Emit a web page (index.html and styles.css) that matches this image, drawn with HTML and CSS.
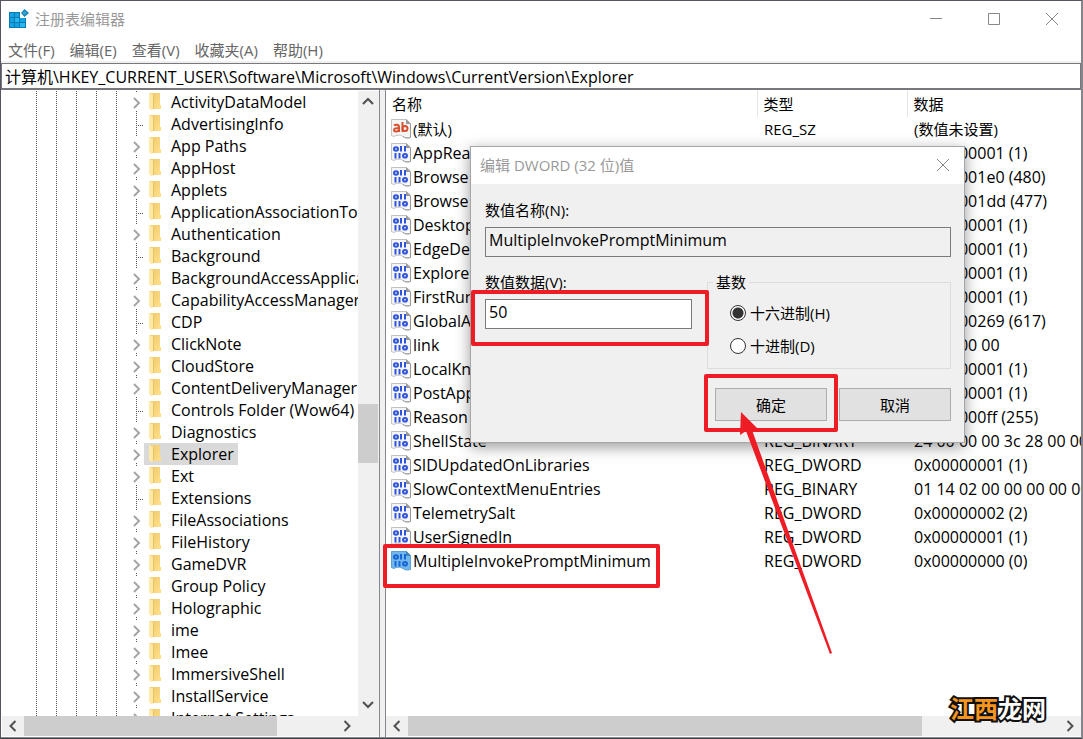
FILE: index.html
```html
<!DOCTYPE html>
<html lang="zh-CN">
<head>
<meta charset="utf-8">
<title>注册表编辑器</title>
<link rel="stylesheet" href="styles.css">
</head>
<body>
<svg class="sprite" aria-hidden="true">
  <defs>
    <linearGradient id="folder-face" x1="0" y1="0" x2="1" y2="1">
      <stop offset="0" stop-color="#efc96c"/><stop offset="1" stop-color="#ffe08a"/>
    </linearGradient>
    <symbol id="guides" viewBox="0 0 142 22">
      <path d="M34.500 0V22M54.500 0V22M74.500 0V22M94.500 0V22M114.500 0V22" stroke="#555" stroke-dasharray="1 1" fill="none"/>
    </symbol>
    <symbol id="branch" viewBox="0 0 142 22">
      <use href="#guides" width="142" height="22"/>
      <path d="M134.500 0V1M134.500 20V21" stroke="#555" fill="none"/>
      <path d="M132 7L137 12L132 17" stroke="#a6a6a6" stroke-width="2" fill="none"/>
    </symbol>
    <symbol id="leaf" viewBox="0 0 142 22">
      <use href="#guides" width="142" height="22"/>
      <path d="M134.500 0V22M134 12.500H142" stroke="#555" stroke-dasharray="1 1" fill="none"/>
    </symbol>
    <symbol id="folder" viewBox="0 0 13 18">
      <path d="M1 0H11V12H12V16H1Z" fill="url(#folder-face)"/>
      <path d="M0 0H1L4 2V17H2L0 15Z" fill="#ffe9a6"/>
      <path d="M4.500 2V16" stroke="#e9c263" fill="none"/>
    </symbol>
    <symbol id="page" viewBox="0 0 20 20">
      <path d="M0.500 0.500H15.500L19.500 4.500V18.500C16 19.500 14 19 12 17.500C9 15.500 5 16 3 17.500L0.500 16.500Z" fill="#f6f6f6" stroke="#c2c2c2"/>
      <path d="M15 0V5H20Z" fill="#999"/>
      <path d="M19.500 5V18.500C16 19.500 14 19 12 17.500" fill="none" stroke="#999"/>
    </symbol>
    <symbol id="digits" viewBox="0 0 20 20">
      <g fill="none" stroke-width="2">
        <ellipse cx="5" cy="6" rx="2" ry="1.800"/><path d="M10 3V8.500M14 3V8.500"/>
        <path d="M4.500 10V15.500M8.500 10V15.500"/><ellipse cx="14" cy="12.800" rx="2" ry="1.800"/>
      </g>
    </symbol>
    <symbol id="binary" viewBox="0 0 20 20">
      <use href="#page" width="20" height="20"/>
      <use href="#digits" width="20" height="20" stroke="#2f55dd"/>
    </symbol>
    <symbol id="binary-active" viewBox="0 0 20 20">
      <path d="M0.500 0.500H15.500L19.500 4.500V18.500C16 19.500 14 19 12 17.500C9 15.500 5 16 3 17.500L0.500 16.500Z" fill="#72b8ea" stroke="#5a9fd6"/>
      <path d="M15 0V5H20Z" fill="#3f82b8"/>
      <use href="#digits" width="20" height="20" stroke="#1666d8"/>
    </symbol>
    <symbol id="string" viewBox="0 0 20 20">
      <use href="#page" width="20" height="20"/>
      <g fill="none" stroke="#d9502e" stroke-width="2">
        <path d="M3 6.500C4 5.500 8 5 8 8V13M8 9C5 9 3 9.500 3 11C3 13 7 13 8 11"/>
        <path d="M11.500 3V13"/><ellipse cx="14" cy="9.500" rx="2.500" ry="2.500"/>
      </g>
    </symbol>
    <symbol id="left" viewBox="0 0 20 20"><path d="M12.500 5L7.500 10L12.500 15" fill="none" stroke="#505050" stroke-width="2"/></symbol>
    <symbol id="right" viewBox="0 0 20 20"><path d="M7.500 5L12.500 10L7.500 15" fill="none" stroke="#505050" stroke-width="2"/></symbol>
    <symbol id="up" viewBox="0 0 20 20"><path d="M5 13L10 8L15 13" fill="none" stroke="#505050" stroke-width="2"/></symbol>
    <symbol id="down" viewBox="0 0 20 20"><path d="M5 6L10 11L15 6" fill="none" stroke="#505050" stroke-width="2"/></symbol>
    <symbol id="cross" viewBox="0 0 12 12"><path d="M0 0L12 12M12 0L0 12" stroke="#888" fill="none"/></symbol>
  </defs>
</svg>

<div class="window">
  <header class="titlebar">
    <svg class="app-icon" viewBox="0 0 20 20" aria-hidden="true">
      <path d="M0 3H11V9H17V19H0Z" fill="#087bb5"/>
      <path d="M1 4H5V8H1ZM6 4H10V8H6ZM1 9H5V13H1ZM11 9H16V13H11ZM1 14H5V18H1ZM6 14H10V18H6Z" fill="#14a3e2"/>
      <path d="M6 9H10V13H6ZM11 14H16V18H11Z" fill="#2ab8f0"/>
      <path d="M15.500 0L20 4L15.500 8L12 4Z" fill="#1683b8"/>
      <path d="M15.500 2L18 4L15.500 6L13.500 4Z" fill="#3aa5d4"/>
    </svg>
    <h1 class="title">注册表编辑器</h1>
    <div class="window-buttons">
      <button class="window-button" aria-label="最小化"><svg viewBox="0 0 12 12"><path d="M0 5.500H12" stroke="#888"/></svg></button>
      <button class="window-button" aria-label="最大化"><svg viewBox="0 0 12 12"><path d="M0.500 0.500H11.500V11.500H0.500Z" stroke="#888" fill="none"/></svg></button>
      <button class="window-button" aria-label="关闭"><svg><use href="#cross"/></svg></button>
    </div>
  </header>
  <nav class="menu">
    <button>文件(F)</button><button>编辑(E)</button><button>查看(V)</button><button>收藏夹(A)</button><button>帮助(H)</button>
  </nav>
  <input class="address" aria-label="地址" value="计算机\HKEY_CURRENT_USER\Software\Microsoft\Windows\CurrentVersion\Explorer">

  <main class="panes">
    <section class="pane tree-pane">
      <div class="tree-view">
        <ul class="tree">
          <li><svg class="guide"><use href="#branch"/></svg><span class="node"><svg class="folder"><use href="#folder"/></svg>ActivityDataModel</span></li>
          <li><svg class="guide"><use href="#leaf"/></svg><span class="node"><svg class="folder"><use href="#folder"/></svg>AdvertisingInfo</span></li>
          <li><svg class="guide"><use href="#branch"/></svg><span class="node"><svg class="folder"><use href="#folder"/></svg>App Paths</span></li>
          <li><svg class="guide"><use href="#branch"/></svg><span class="node"><svg class="folder"><use href="#folder"/></svg>AppHost</span></li>
          <li><svg class="guide"><use href="#branch"/></svg><span class="node"><svg class="folder"><use href="#folder"/></svg>Applets</span></li>
          <li><svg class="guide"><use href="#leaf"/></svg><span class="node"><svg class="folder"><use href="#folder"/></svg>ApplicationAssociationTo</span></li>
          <li><svg class="guide"><use href="#branch"/></svg><span class="node"><svg class="folder"><use href="#folder"/></svg>Authentication</span></li>
          <li><svg class="guide"><use href="#leaf"/></svg><span class="node"><svg class="folder"><use href="#folder"/></svg>Background</span></li>
          <li><svg class="guide"><use href="#branch"/></svg><span class="node"><svg class="folder"><use href="#folder"/></svg>BackgroundAccessApplica</span></li>
          <li><svg class="guide"><use href="#branch"/></svg><span class="node"><svg class="folder"><use href="#folder"/></svg>CapabilityAccessManager</span></li>
          <li><svg class="guide"><use href="#leaf"/></svg><span class="node"><svg class="folder"><use href="#folder"/></svg>CDP</span></li>
          <li><svg class="guide"><use href="#branch"/></svg><span class="node"><svg class="folder"><use href="#folder"/></svg>ClickNote</span></li>
          <li><svg class="guide"><use href="#branch"/></svg><span class="node"><svg class="folder"><use href="#folder"/></svg>CloudStore</span></li>
          <li><svg class="guide"><use href="#branch"/></svg><span class="node"><svg class="folder"><use href="#folder"/></svg>ContentDeliveryManager</span></li>
          <li><svg class="guide"><use href="#leaf"/></svg><span class="node"><svg class="folder"><use href="#folder"/></svg>Controls Folder (Wow64)</span></li>
          <li><svg class="guide"><use href="#branch"/></svg><span class="node"><svg class="folder"><use href="#folder"/></svg>Diagnostics</span></li>
          <li><svg class="guide"><use href="#branch"/></svg><span class="node selected"><svg class="folder"><use href="#folder"/></svg>Explorer</span></li>
          <li><svg class="guide"><use href="#branch"/></svg><span class="node"><svg class="folder"><use href="#folder"/></svg>Ext</span></li>
          <li><svg class="guide"><use href="#leaf"/></svg><span class="node"><svg class="folder"><use href="#folder"/></svg>Extensions</span></li>
          <li><svg class="guide"><use href="#branch"/></svg><span class="node"><svg class="folder"><use href="#folder"/></svg>FileAssociations</span></li>
          <li><svg class="guide"><use href="#branch"/></svg><span class="node"><svg class="folder"><use href="#folder"/></svg>FileHistory</span></li>
          <li><svg class="guide"><use href="#branch"/></svg><span class="node"><svg class="folder"><use href="#folder"/></svg>GameDVR</span></li>
          <li><svg class="guide"><use href="#branch"/></svg><span class="node"><svg class="folder"><use href="#folder"/></svg>Group Policy</span></li>
          <li><svg class="guide"><use href="#branch"/></svg><span class="node"><svg class="folder"><use href="#folder"/></svg>Holographic</span></li>
          <li><svg class="guide"><use href="#branch"/></svg><span class="node"><svg class="folder"><use href="#folder"/></svg>ime</span></li>
          <li><svg class="guide"><use href="#branch"/></svg><span class="node"><svg class="folder"><use href="#folder"/></svg>Imee</span></li>
          <li><svg class="guide"><use href="#branch"/></svg><span class="node"><svg class="folder"><use href="#folder"/></svg>ImmersiveShell</span></li>
          <li><svg class="guide"><use href="#branch"/></svg><span class="node"><svg class="folder"><use href="#folder"/></svg>InstallService</span></li>
          <li><svg class="guide"><use href="#branch"/></svg><span class="node"><svg class="folder"><use href="#folder"/></svg>Internet Settings</span></li>
        </ul>
        <div class="vscroll">
          <svg class="arrow"><use href="#up"/></svg>
          <div class="vtrack"><div class="vthumb"></div></div>
          <svg class="arrow"><use href="#down"/></svg>
        </div>
      </div>
      <div class="hscroll tree-hscroll">
        <svg class="arrow"><use href="#left"/></svg>
        <div class="track"><div class="thumb tree-thumb"></div></div>
        <svg class="arrow"><use href="#right"/></svg>
      </div>
    </section>

    <section class="pane list-pane">
      <div class="list-view">
        <table class="values">
          <colgroup><col class="col-name"><col class="col-type"><col></colgroup>
          <thead><tr><th>名称</th><th>类型</th><th>数据</th></tr></thead>
          <tbody>
            <tr class="default-value"><td><svg class="kind"><use href="#string"/></svg>(默认)</td><td>REG_SZ</td><td>(数值未设置)</td></tr>
            <tr><td><svg class="kind"><use href="#binary"/></svg>AppRea</td><td>REG_DWORD</td><td>0x00000001 (1)</td></tr>
            <tr><td><svg class="kind"><use href="#binary"/></svg>Browse</td><td>REG_DWORD</td><td>0x000001e0 (480)</td></tr>
            <tr><td><svg class="kind"><use href="#binary"/></svg>Browse</td><td>REG_DWORD</td><td>0x000001dd (477)</td></tr>
            <tr><td><svg class="kind"><use href="#binary"/></svg>Desktop</td><td>REG_DWORD</td><td>0x00000001 (1)</td></tr>
            <tr><td><svg class="kind"><use href="#binary"/></svg>EdgeDe</td><td>REG_DWORD</td><td>0x00000001 (1)</td></tr>
            <tr><td><svg class="kind"><use href="#binary"/></svg>Explorer</td><td>REG_DWORD</td><td>0x00000001 (1)</td></tr>
            <tr><td><svg class="kind"><use href="#binary"/></svg>FirstRun</td><td>REG_DWORD</td><td>0x00000001 (1)</td></tr>
            <tr><td><svg class="kind"><use href="#binary"/></svg>GlobalA</td><td>REG_DWORD</td><td>0x00000269 (617)</td></tr>
            <tr><td><svg class="kind"><use href="#binary"/></svg>link</td><td>REG_BINARY</td><td>00 00 00 00</td></tr>
            <tr><td><svg class="kind"><use href="#binary"/></svg>LocalKn</td><td>REG_DWORD</td><td>0x00000001 (1)</td></tr>
            <tr><td><svg class="kind"><use href="#binary"/></svg>PostApp</td><td>REG_DWORD</td><td>0x00000001 (1)</td></tr>
            <tr><td><svg class="kind"><use href="#binary"/></svg>Reason</td><td>REG_DWORD</td><td>0x000000ff (255)</td></tr>
            <tr><td><svg class="kind"><use href="#binary"/></svg>ShellState</td><td>REG_BINARY</td><td>24 00 00 00 3c 28 00 00</td></tr>
            <tr><td><svg class="kind"><use href="#binary"/></svg>SIDUpdatedOnLibraries</td><td>REG_DWORD</td><td>0x00000001 (1)</td></tr>
            <tr><td><svg class="kind"><use href="#binary"/></svg>SlowContextMenuEntries</td><td>REG_BINARY</td><td>01 14 02 00 00 00 00 00</td></tr>
            <tr><td><svg class="kind"><use href="#binary"/></svg>TelemetrySalt</td><td>REG_DWORD</td><td>0x00000002 (2)</td></tr>
            <tr><td><svg class="kind"><use href="#binary"/></svg>UserSignedIn</td><td>REG_DWORD</td><td>0x00000001 (1)</td></tr>
            <tr><td><svg class="kind"><use href="#binary-active"/></svg>MultipleInvokePromptMinimum</td><td>REG_DWORD</td><td>0x00000000 (0)</td></tr>
          </tbody>
        </table>
      </div>
      <div class="hscroll">
        <svg class="arrow"><use href="#left"/></svg>
        <div class="track"><div class="thumb list-thumb"></div></div>
        <svg class="arrow"><use href="#right"/></svg>
      </div>
    </section>
  </main>
</div>

<form class="dialog" role="dialog" aria-labelledby="dialog-title">
  <header class="dialog-bar">
    <h2 class="title" id="dialog-title">编辑 DWORD (32 位)值</h2>
    <button type="button" class="dialog-close" aria-label="关闭"><svg><use href="#cross"/></svg></button>
  </header>
  <div class="dialog-body">
    <label for="value-name">数值名称(N):</label>
    <input class="field" id="value-name" value="MultipleInvokePromptMinimum" readonly>
    <div class="dialog-row">
      <div class="data-group">
        <label for="value-data">数值数据(V):</label>
        <input class="field" id="value-data" value="50">
      </div>
      <fieldset class="base">
        <legend>基数</legend>
        <label><input type="radio" name="base" checked>十六进制(H)</label>
        <label><input type="radio" name="base">十进制(D)</label>
      </fieldset>
    </div>
    <div class="actions">
      <button type="button">确定</button>
      <button type="button">取消</button>
    </div>
  </div>
</form>

<svg class="marks" viewBox="0 0 1083 739" aria-hidden="true">
  <g fill="none" stroke="#ee1c25" stroke-width="4" stroke-linejoin="round">
    <rect x="473" y="292" width="234" height="52"/>
    <rect x="385" y="546" width="273" height="40"/>
    <rect x="706" y="376" width="130" height="54"/>
  </g>
  <path d="M741 412L757 428L752 430L832 653L830 654L746 431L740 435Z" fill="#ee1c25"/>
</svg>
<div class="watermark"><span>江西</span>龙网</div>
</body>
</html>
```
FILE: styles.css
```css
* { box-sizing: border-box; }

body {
  margin: 0;
  height: 100vh;
  overflow: hidden;
  font: 15px/22px "Open Sans", "Noto Sans CJK SC", sans-serif;
  color: #000;
}

button, input { font: inherit; color: inherit; }
svg { display: block; flex: none; }
.sprite { position: absolute; width: 0; height: 0; }

.window {
  height: 100%;
  display: flex;
  flex-direction: column;
  background: #fff;
  border: 1px solid #55565f;
  border-right: 2px solid #85858b;
  border-bottom-color: #3f3f48;
}

.titlebar { display: flex; align-items: center; height: 36px; padding-left: 8px; }
.app-icon { width: 20px; height: 20px; }
.title { margin: 0; font-size: 15px; font-weight: 400; color: #999; }
.titlebar .title { flex: 1; padding-left: 6px; }
.window-buttons { display: flex; }
.window-button {
  width: 58px;
  height: 36px;
  padding: 0;
  border: 0;
  background: none;
  display: grid;
  place-items: center;
}
.window-button svg, .dialog-close svg { width: 12px; height: 12px; }

.menu { display: flex; gap: 15px; height: 26px; padding: 2px 0 0 7px; border-bottom: 2px solid #f0f0f0; }
.menu button { padding: 0; border: 0; background: none; color: #666; }

.address {
  height: 27px;
  width: 100%;
  padding: 0 3px 1px;
  border: 1px solid #77777c;
  border-bottom-width: 2px;
  outline: 0;
  background: #fff;
}

.address, .tree, .values td, .field { font-size: 16px; }

.panes { flex: 1; min-height: 0; display: flex; gap: 5px; background: #f0f0f0; border-bottom: 1px solid #85878f; }
.pane { display: flex; flex-direction: column; min-width: 0; padding-bottom: 1px; background: #fff; }
.tree-pane { flex: 0 0 379px; border-right: 1px solid #85878f; padding-left: 1px; }
.list-pane { flex: 1; border-left: 1px solid #85878f; }

.tree-view { flex: 1; min-height: 0; display: flex; background: #f0f0f0; padding-right: 1px; border-top: 1px solid #fff; }
.tree { flex: 1; min-width: 0; margin: 0; padding: 0; overflow: hidden; list-style: none; background: #fff; }
.tree li { display: flex; height: 22px; white-space: nowrap; }
.guide { width: 142px; height: 22px; }
.node { display: flex; align-items: center; gap: 9px; padding: 0 4px 0 5px; }
.selected { background: #d9d9d9; }
.folder { width: 13px; height: 18px; }

.arrow { width: 20px; height: 20px; }
.vscroll { width: 20px; display: flex; flex-direction: column; }
.vtrack { flex: 1; display: flex; flex-direction: column; }
.vthumb { height: 10%; margin-top: 293px; background: #cdcdcd; }
.hscroll { display: flex; gap: 1px; height: 20px; padding: 0 1px; background: #f0f0f0; }
.track { flex: 1; }
.thumb { height: 20px; background: #cdcdcd; }
.tree-hscroll { padding-right: 22px; }
.tree-thumb { width: 81%; }
.list-thumb { width: 79%; }

.list-view { flex: 1; min-height: 0; overflow: hidden; }
.values { width: 100%; table-layout: fixed; border-collapse: collapse; white-space: nowrap; }
.col-name { width: 371px; }
.col-type { width: 150px; }
.values th { height: 27px; padding: 0 6px; font-weight: 400; text-align: left; border-right: 1px solid #e5e5e5; }
.values th:last-child { border: 0; }
.values td { height: 24px; padding: 0 7px; overflow: hidden; line-height: 24px; }
.values .default-value td { font-size: 15px; }
.values td:first-child { display: flex; align-items: center; gap: 2px; padding: 0 5px; }
.values td:last-child { padding-right: 0; }
.kind { width: 20px; height: 20px; }

.dialog {
  position: absolute;
  left: 470px;
  top: 146px;
  width: 495px;
  background: #f0f0f0;
  border: 1px solid #a6a6a6;
  box-shadow: 0 4px 14px rgb(0 0 0 / 40%);
}
.dialog-bar { display: flex; align-items: center; height: 37px; padding: 0 7px 2px 9px; background: #fff; }
.dialog-bar .title { flex: 1; }
.dialog-close { width: 28px; height: 28px; padding: 0; border: 0; background: none; display: grid; place-items: center; }
.dialog-body { padding: 15px 13px 21px 14px; }
.dialog-body > label, .data-group label { display: block; height: 28px; }
.field { display: block; width: 100%; height: 30px; padding: 0 3px 4px; border: 1px solid #7a7a7a; outline: 0; background: #fff; }
.field:read-only { background: #f0f0f0; }
.dialog-row { display: flex; gap: 15px; padding-top: 14px; }
.data-group { width: 207px; }
.base { flex: 1; margin: 0; padding: 9px 20px 11px 22px; border: 1px solid #dcdcdc; }
.base legend { height: 22px; margin-left: -17px; padding: 0 3px; }
.base label { display: flex; align-items: center; gap: 4px; }
.base label + label { margin-top: 11px; }
.base input { appearance: none; width: 16px; height: 16px; margin: 0; border: 1px solid #333; border-radius: 50%; background: #fff; }
.base input:checked { background: radial-gradient(circle, #333 5px, #fff 6px); }
.actions { display: flex; justify-content: flex-end; gap: 12px; padding-top: 19px; }
.actions button { width: 112px; height: 33px; padding: 0; border: 1px solid #adadad; background: #e1e1e1; }

.marks { position: absolute; left: 0; top: 0; width: 1083px; height: 739px; pointer-events: none; }

.watermark {
  position: absolute;
  right: 37px;
  bottom: 15px;
  font: 700 24px/32px "Noto Sans CJK SC", sans-serif;
  color: #fff;
  -webkit-text-stroke: 4px #111;
  paint-order: stroke fill;
}
.watermark span { color: #f7941d; }
```
